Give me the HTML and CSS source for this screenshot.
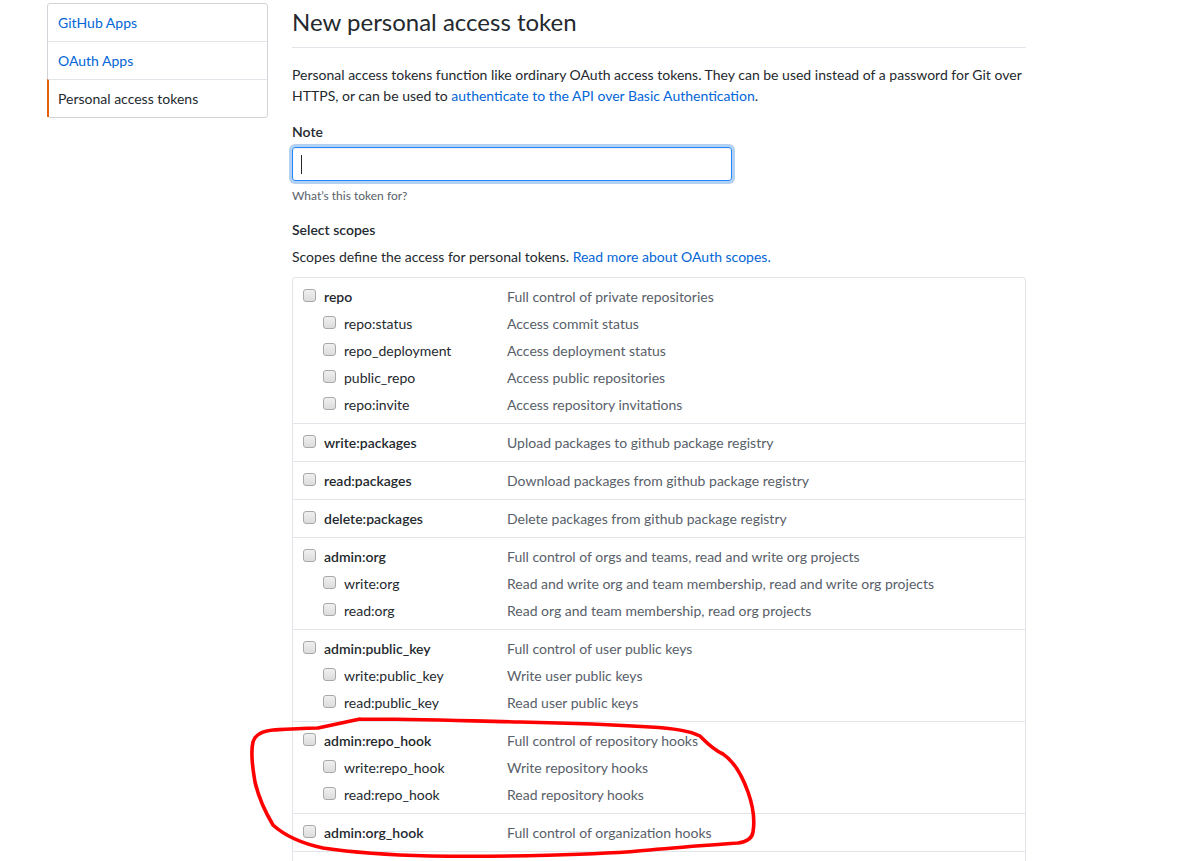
FILE: index.html
```html
<!DOCTYPE html>
<html lang="en">
<head>
<meta charset="utf-8">
<title>New personal access token</title>
<link rel="stylesheet" href="styles.css">
</head>
<body>
<div class="layout">
  <nav class="sidebar">
    <a class="side-item" href="#">GitHub Apps</a>
    <a class="side-item" href="#">OAuth Apps</a>
    <a class="side-item selected" href="#">Personal access tokens</a>
  </nav>
  <main class="main">
    <h2 class="title">New personal access token</h2>
    <p class="intro">Personal access tokens function like ordinary OAuth access tokens. They can be used instead of a password for Git over HTTPS, or can be used to <a href="#">authenticate to the API over Basic Authentication</a>.</p>
    <div class="field">
      <label class="field-label">Note</label>
      <div class="input focused"><span class="caret"></span></div>
      <p class="note">What’s this token for?</p>
    </div>
    <div class="field scopes-field">
      <label class="field-label">Select scopes</label>
      <p class="scopes-help">Scopes define the access for personal tokens. <a href="#">Read more about OAuth scopes.</a></p>
      <div class="scopes">
        <div class="group">
          <div class="row top"><span class="lbl"><input type="checkbox" class="cb">repo</span><span class="desc">Full control of private repositories</span></div>
          <div class="row sub"><span class="lbl"><input type="checkbox" class="cb">repo:status</span><span class="desc">Access commit status</span></div>
          <div class="row sub"><span class="lbl"><input type="checkbox" class="cb">repo_deployment</span><span class="desc">Access deployment status</span></div>
          <div class="row sub"><span class="lbl"><input type="checkbox" class="cb">public_repo</span><span class="desc">Access public repositories</span></div>
          <div class="row sub"><span class="lbl"><input type="checkbox" class="cb">repo:invite</span><span class="desc">Access repository invitations</span></div>
        </div>
        <div class="group">
          <div class="row top"><span class="lbl"><input type="checkbox" class="cb">write:packages</span><span class="desc">Upload packages to github package registry</span></div>
        </div>
        <div class="group">
          <div class="row top"><span class="lbl"><input type="checkbox" class="cb">read:packages</span><span class="desc">Download packages from github package registry</span></div>
        </div>
        <div class="group">
          <div class="row top"><span class="lbl"><input type="checkbox" class="cb">delete:packages</span><span class="desc">Delete packages from github package registry</span></div>
        </div>
        <div class="group">
          <div class="row top"><span class="lbl"><input type="checkbox" class="cb">admin:org</span><span class="desc">Full control of orgs and teams, read and write org projects</span></div>
          <div class="row sub"><span class="lbl"><input type="checkbox" class="cb">write:org</span><span class="desc">Read and write org and team membership, read and write org projects</span></div>
          <div class="row sub"><span class="lbl"><input type="checkbox" class="cb">read:org</span><span class="desc">Read org and team membership, read org projects</span></div>
        </div>
        <div class="group">
          <div class="row top"><span class="lbl"><input type="checkbox" class="cb">admin:public_key</span><span class="desc">Full control of user public keys</span></div>
          <div class="row sub"><span class="lbl"><input type="checkbox" class="cb">write:public_key</span><span class="desc">Write user public keys</span></div>
          <div class="row sub"><span class="lbl"><input type="checkbox" class="cb">read:public_key</span><span class="desc">Read user public keys</span></div>
        </div>
        <div class="group">
          <div class="row top"><span class="lbl"><input type="checkbox" class="cb">admin:repo_hook</span><span class="desc">Full control of repository hooks</span></div>
          <div class="row sub"><span class="lbl"><input type="checkbox" class="cb">write:repo_hook</span><span class="desc">Write repository hooks</span></div>
          <div class="row sub"><span class="lbl"><input type="checkbox" class="cb">read:repo_hook</span><span class="desc">Read repository hooks</span></div>
        </div>
        <div class="group">
          <div class="row top"><span class="lbl"><input type="checkbox" class="cb">admin:org_hook</span><span class="desc">Full control of organization hooks</span></div>
        </div>
        <div class="group">
          <div class="row top"><span class="lbl"><input type="checkbox" class="cb">gist</span><span class="desc">Create gists</span></div>
        </div>
      </div>
    </div>
  </main>
</div>
<svg class="annotation" width="1181" height="861" viewBox="0 0 1181 861" aria-hidden="true">
  <path d="M360 719 L318 728 M360 719 C420 719 470 721 520 722 C570 723 620 725 650 727 C670 728 690 731 700 736 C706 742 712 749 723 754 C735 762 743 778 748 792 C753 806 755 820 753 832 C752 840 745 842 738 843 C710 845 680 847 650 850 C600 855 500 857 430 856 C390 855 350 852 323 848 C300 843 285 836 273 825 C264 810 258 795 255 782 C252 765 251 750 253 742 C255 735 262 731 273 730 C290 729 305 728 318 728" fill="none" stroke="#f00" stroke-width="3.6" stroke-linecap="round" stroke-linejoin="round"/>
</svg>
</body>
</html>
```
FILE: styles.css
```css
html, body {
  margin: 0;
  padding: 0;
  background: #fff;
}
body {
  font-family: Lato, "Noto Sans", sans-serif;
  font-size: 14px;
  line-height: 1.5;
  color: #24292e;
  position: relative;
  width: 1181px;
  height: 861px;
  overflow: hidden;
}
a {
  color: #0366d6;
  text-decoration: none;
}
.layout {
  display: flex;
  gap: 24px;
  padding-left: 47px;
}
.sidebar {
  width: 221px;
  flex: none;
  margin-top: 3px;
  border: 1px solid #d1d5da;
  border-radius: 3px;
  align-self: flex-start;
  display: flex;
  flex-direction: column;
  box-sizing: border-box;
}
.side-item {
  display: block;
  padding: 8px 10px;
  line-height: 21px;
  border-top: 1px solid #e1e4e8;
}
.side-item:first-child {
  border-top: 0;
}
.side-item.selected {
  color: #24292e;
  border-left: 2px solid #e36209;
  margin-left: -1px;
  padding-left: 9px;
  font-weight: 400;
}
.main {
  width: 734px;
  flex: none;
}
.title {
  margin: 0;
  font-size: 24px;
  font-weight: 400;
  line-height: 36px;
  padding-top: 4px;
  padding-bottom: 7px;
  border-bottom: 1px solid #e1e4e8;
}
.intro {
  margin: 16px 0 0;
  line-height: 21px;
}
.field {
  margin-top: 15px;
}
.scopes-field {
  margin-top: 14px;
}
.field-label {
  display: block;
  font-weight: 600;
  line-height: 21px;
}
.input {
  margin-top: 5px;
  width: 440px;
  height: 34px;
  box-sizing: border-box;
  border: 1px solid #d1d5da;
  border-radius: 3px;
  padding: 7px 8px;
  display: flex;
  align-items: center;
}
.input.focused {
  border-color: #2188ff;
  box-shadow: inset 0 1px 2px rgba(27, 31, 35, 0.075), 0 0 0 3px rgba(3, 102, 214, 0.3);
}
.caret {
  width: 1px;
  height: 19px;
  background: #24292e;
}
.note {
  margin: 6px 0 0;
  font-size: 12px;
  line-height: 18px;
  color: #586069;
}
.scopes-help {
  margin: 6px 0 0;
  line-height: 21px;
}
.scopes {
  margin-top: 10px;
  border: 1px solid #e1e4e8;
  border-radius: 3px;
}
.group {
  padding: 5px 10px;
  border-top: 1px solid #e1e4e8;
}
.group:first-child {
  border-top: 0;
}
.row {
  display: flex;
  align-items: center;
  height: 27px;
}
.lbl {
  width: 204px;
  flex: none;
  display: flex;
  align-items: center;
  box-sizing: border-box;
}
.row.top .lbl {
  font-weight: 600;
}
.row.sub .lbl {
  padding-left: 20px;
}
.desc {
  color: #586069;
}
.cb {
  appearance: none;
  -webkit-appearance: none;
  width: 13px;
  height: 13px;
  margin: -3px 8px 0 0;
  border: 1px solid #a9a9a9;
  border-radius: 3px;
  background: linear-gradient(#f0f0f0, #dcdcdc);
  box-sizing: border-box;
  flex: none;
}
.annotation {
  position: absolute;
  top: 0;
  left: 0;
  pointer-events: none;
}
```
